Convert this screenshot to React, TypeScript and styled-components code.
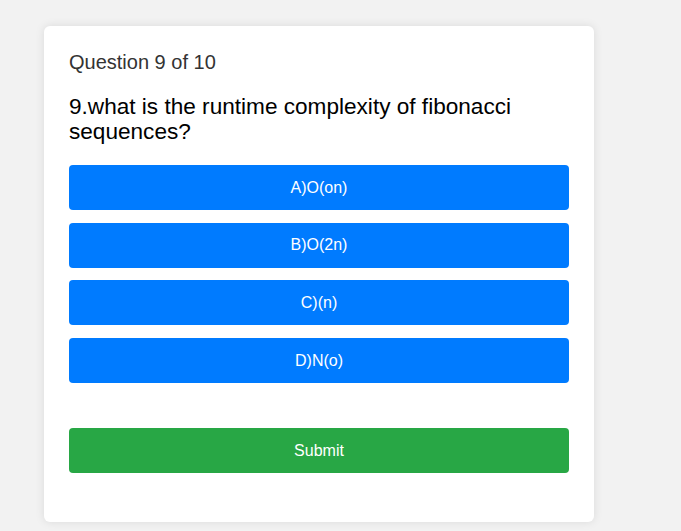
import React from "react";
import styled, { createGlobalStyle } from "styled-components";

const Global = createGlobalStyle`
  html, body { margin: 0; padding: 0; background: #f2f2f2; }
  body { font-family: "Liberation Sans", Arial, sans-serif; }
`;

const Page = styled.div`
  padding: 26px 0 0 44px;
  min-height: 531px;
  box-sizing: border-box;
`;

const Card = styled.div`
  width: 550px;
  box-sizing: border-box;
  background: #fff;
  border-radius: 6px;
  box-shadow: 0 0 10px rgba(0, 0, 0, 0.1);
  padding: 24px 25px 49px;
  display: flex;
  flex-direction: column;
`;

const Counter = styled.div`
  font-size: 20px;
  color: #333;
  line-height: 24px;
`;

const QuestionText = styled.h2`
  margin: 20px 0 21px;
  font-size: 22.6px;
  font-weight: 400;
  line-height: 25px;
  color: #000;
`;

const Options = styled.div`
  display: flex;
  flex-direction: column;
  gap: 12.7px;
`;

const Btn = styled.button<{ $variant?: "primary" | "success" }>`
  height: 45px;
  width: 100%;
  border: none;
  border-radius: 4px;
  background: ${(p) => (p.$variant === "success" ? "#28a745" : "#007bff")};
  color: #fff;
  font-family: "Liberation Sans", Arial, sans-serif;
  font-size: 16px;
  cursor: pointer;
`;

const SubmitRow = styled.div`
  margin-top: 45px;
`;

const options = ["A)O(on)", "B)O(2n)", "C)(n)", "D)N(o)"];

export default function App() {
  return (
    <>
      <Global />
      <Page>
        <Card>
          <Counter>Question 9 of 10</Counter>
          <QuestionText>9.what is the runtime complexity of fibonacci sequences?</QuestionText>
          <Options>
            {options.map((o) => (
              <Btn key={o}>{o}</Btn>
            ))}
          </Options>
          <SubmitRow>
            <Btn $variant="success">Submit</Btn>
          </SubmitRow>
        </Card>
      </Page>
    </>
  );
}
